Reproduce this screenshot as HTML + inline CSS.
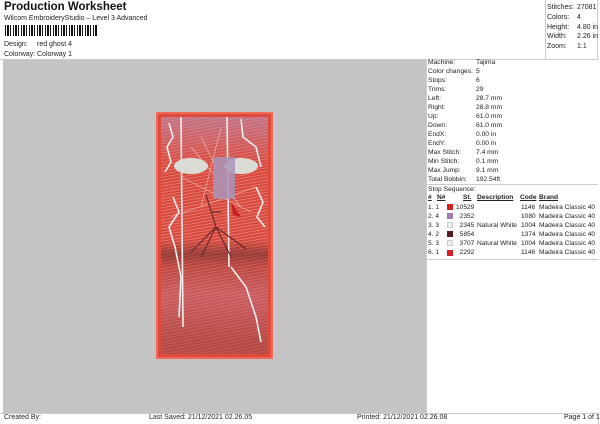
<!DOCTYPE html><html><head><style>
*{margin:0;padding:0;box-sizing:border-box}
body{width:600px;height:424px;background:#fff;font-family:"Liberation Sans",sans-serif;font-size:7px;color:#222;position:relative;overflow:hidden}
.a{position:absolute;white-space:nowrap}
.r{position:absolute;left:428px;white-space:nowrap;line-height:9px;font-size:6.7px}
.r span{position:absolute;left:48px}
.t{font-size:6.6px}
</style></head><body>
<div class="a" style="left:4px;top:1px;font-size:11.5px;font-weight:bold;color:#111">Production Worksheet</div>
<div class="a" style="left:4px;top:15px">Wilcom EmbroideryStudio – Level 3 Advanced</div>
<div class="a" style="left:5px;top:25px;width:92px;height:11px;background:repeating-linear-gradient(90deg,#111 0 1px,#fff 1px 2px,#111 2px 4px,#fff 4px 5px,#111 5px 6px,#fff 6px 8px)"></div>
<div class="a" style="left:4px;top:41px">Design:</div><div class="a" style="left:37px;top:41px">red ghost 4</div>
<div class="a" style="left:4px;top:51px">Colorway:</div><div class="a" style="left:37px;top:51px">Colorway 1</div>
<div class="a" style="left:0;top:0;width:598px;height:60px;border-right:1px solid #ccc;border-bottom:1px solid #ccc"></div>
<div class="a" style="left:545px;top:0;width:53px;height:60px;border-left:1px solid #ccc"></div>
<div class="a" style="left:547px;top:3px;line-height:9.8px">Stitches:<br>Colors:<br>Height:<br>Width:<br>Zoom:</div>
<div class="a" style="left:577px;top:3px;line-height:9.8px">27081<br>4<br>4.80 in<br>2.26 in<br>1:1</div>
<div class="a" style="left:3px;top:60px;width:423px;height:353px;background:#c4c4c4"></div>
<div class="a" style="left:426px;top:60px;width:172px;height:353px;border-left:1px solid #ccc"></div>
<div class="a" style="left:156px;top:112px;width:117px;height:247px;background:#e04a3c;border:2px solid #f06a5a"></div>
<div class="a" style="left:161px;top:117px;width:107px;height:237px;background:
linear-gradient(180deg,rgba(180,150,190,.55) 0,rgba(220,80,70,.2) 20%,transparent 28%),
linear-gradient(180deg,transparent 52%,rgba(110,50,50,.6) 58%,rgba(130,60,60,.3) 63%,rgba(190,110,130,.5) 75%,rgba(150,70,70,.5) 95%),
repeating-linear-gradient(170deg,#d8483c 0 2px,#e5776c 2px 3px)"></div>
<svg class="a" style="left:161px;top:117px" width="107" height="237">
<g fill="none" stroke="#eee" stroke-width="1.6">
<path d="M8 6 L12 20 L6 30 L10 45 L4 55"/><path d="M20 0 L22 210"/><path d="M66 0 L68 150"/><path d="M80 2 L82 20 L95 30 L100 50"/>
<path d="M12 80 L18 95 L8 110 L14 130 L20 160 L18 200"/><path d="M70 150 L85 170 L95 200 L100 225"/><path d="M95 70 L102 85 L96 100 L104 110"/>
</g>
<g stroke="#f4d8d8" stroke-width=".6" opacity=".8"><path d="M30 30 L80 90 M40 20 L70 80 M60 10 L40 90 M20 60 L90 95 M10 100 L95 70"/></g>
<ellipse cx="30" cy="49" rx="17" ry="8" fill="#dcdcd6"/><ellipse cx="80" cy="49" rx="17" ry="8" fill="#dcdcd6"/>
<rect x="52" y="40" width="22" height="42" fill="#a894b8" opacity=".85"/>
<g stroke="#6a2a2a" stroke-width="1.2" fill="none"><path d="M45 78 L55 110 L40 140 M55 110 L70 140 M55 110 L30 135 M55 110 L85 132 M50 95 L60 95"/></g>
<path d="M70 85 L80 100 L72 98 Z" fill="#c82020"/>
</svg>
<div class="r" style="top:58px">Machine:<span>Tajima</span></div>
<div class="r" style="top:67px">Color changes:<span>5</span></div>
<div class="r" style="top:76px">Stops:<span>6</span></div>
<div class="r" style="top:85px">Trims:<span>29</span></div>
<div class="r" style="top:94px">Left:<span>28.7 mm</span></div>
<div class="r" style="top:103px">Right:<span>28.8 mm</span></div>
<div class="r" style="top:112px">Up:<span>61.0 mm</span></div>
<div class="r" style="top:121px">Down:<span>61.0 mm</span></div>
<div class="r" style="top:130px">EndX:<span>0.00 in</span></div>
<div class="r" style="top:139px">EndY:<span>0.00 in</span></div>
<div class="r" style="top:148px">Max Stitch:<span>7.4 mm</span></div>
<div class="r" style="top:157px">Min Stitch:<span>0.1 mm</span></div>
<div class="r" style="top:166px">Max Jump:<span>9.1 mm</span></div>
<div class="r" style="top:175px">Total Bobbin:<span>192.54ft</span></div>
<div class="a" style="left:427px;top:184px;width:171px;border-top:1px solid #ccc"></div>
<div class="r" style="top:185px">Stop Sequence:</div>
<div class="a t" style="left:428px;top:194px;font-weight:bold;text-decoration:underline">#</div>
<div class="a t" style="left:437px;top:194px;font-weight:bold;text-decoration:underline">N#</div>
<div class="a t" style="left:463px;top:194px;font-weight:bold;text-decoration:underline">St.</div>
<div class="a t" style="left:477px;top:194px;font-weight:bold;text-decoration:underline">Description</div>
<div class="a t" style="left:520px;top:194px;font-weight:bold;text-decoration:underline">Code</div>
<div class="a t" style="left:539px;top:194px;font-weight:bold;text-decoration:underline">Brand</div>
<div class="a t" style="left:428px;top:202.5px;line-height:9.1px">1. 1<br>2. 4<br>3. 3<br>4. 2<br>5. 3<br>6. 1</div>
<div class="a" style="left:447px;top:204px;width:6px;height:6px;background:#d42020"></div>
<div class="a" style="left:447px;top:213.1px;width:6px;height:6px;background:#a080b0"></div>
<div class="a" style="left:447px;top:222.2px;width:6px;height:6px;background:#eee;border:1px solid #ccc"></div>
<div class="a" style="left:447px;top:231.3px;width:6px;height:6px;background:#5a1a22"></div>
<div class="a" style="left:447px;top:240.4px;width:6px;height:6px;background:#eee;border:1px solid #ccc"></div>
<div class="a" style="left:447px;top:249.5px;width:6px;height:6px;background:#d42020"></div>
<div class="a t" style="left:456px;top:202.5px;line-height:9.1px">10529<br>&nbsp;&nbsp;2352<br>&nbsp;&nbsp;2345<br>&nbsp;&nbsp;5854<br>&nbsp;&nbsp;3707<br>&nbsp;&nbsp;2292</div>
<div class="a t" style="left:477px;top:202.5px;line-height:9.1px"><br><br>Natural White<br><br>Natural White</div>
<div class="a t" style="left:521px;top:202.5px;line-height:9.1px">1146<br>1080<br>1004<br>1374<br>1004<br>1146</div>
<div class="a t" style="left:539px;top:202.5px;line-height:9.1px">Madeira Classic 40<br>Madeira Classic 40<br>Madeira Classic 40<br>Madeira Classic 40<br>Madeira Classic 40<br>Madeira Classic 40</div>
<div class="a" style="left:427px;top:259px;width:171px;border-top:1px solid #ccc"></div>
<div class="a" style="left:0;top:413px;width:599px;height:11px;border-top:1px solid #ccc;border-right:1px solid #ccc"></div>
<div class="a" style="left:4px;top:414px">Created By:</div>
<div class="a" style="left:149px;top:414px">Last Saved: 21/12/2021 02.26.05</div>
<div class="a" style="left:357px;top:414px">Printed: 21/12/2021 02.26.08</div>
<div class="a" style="left:564px;top:414px">Page 1 of 1</div>
</body></html>
